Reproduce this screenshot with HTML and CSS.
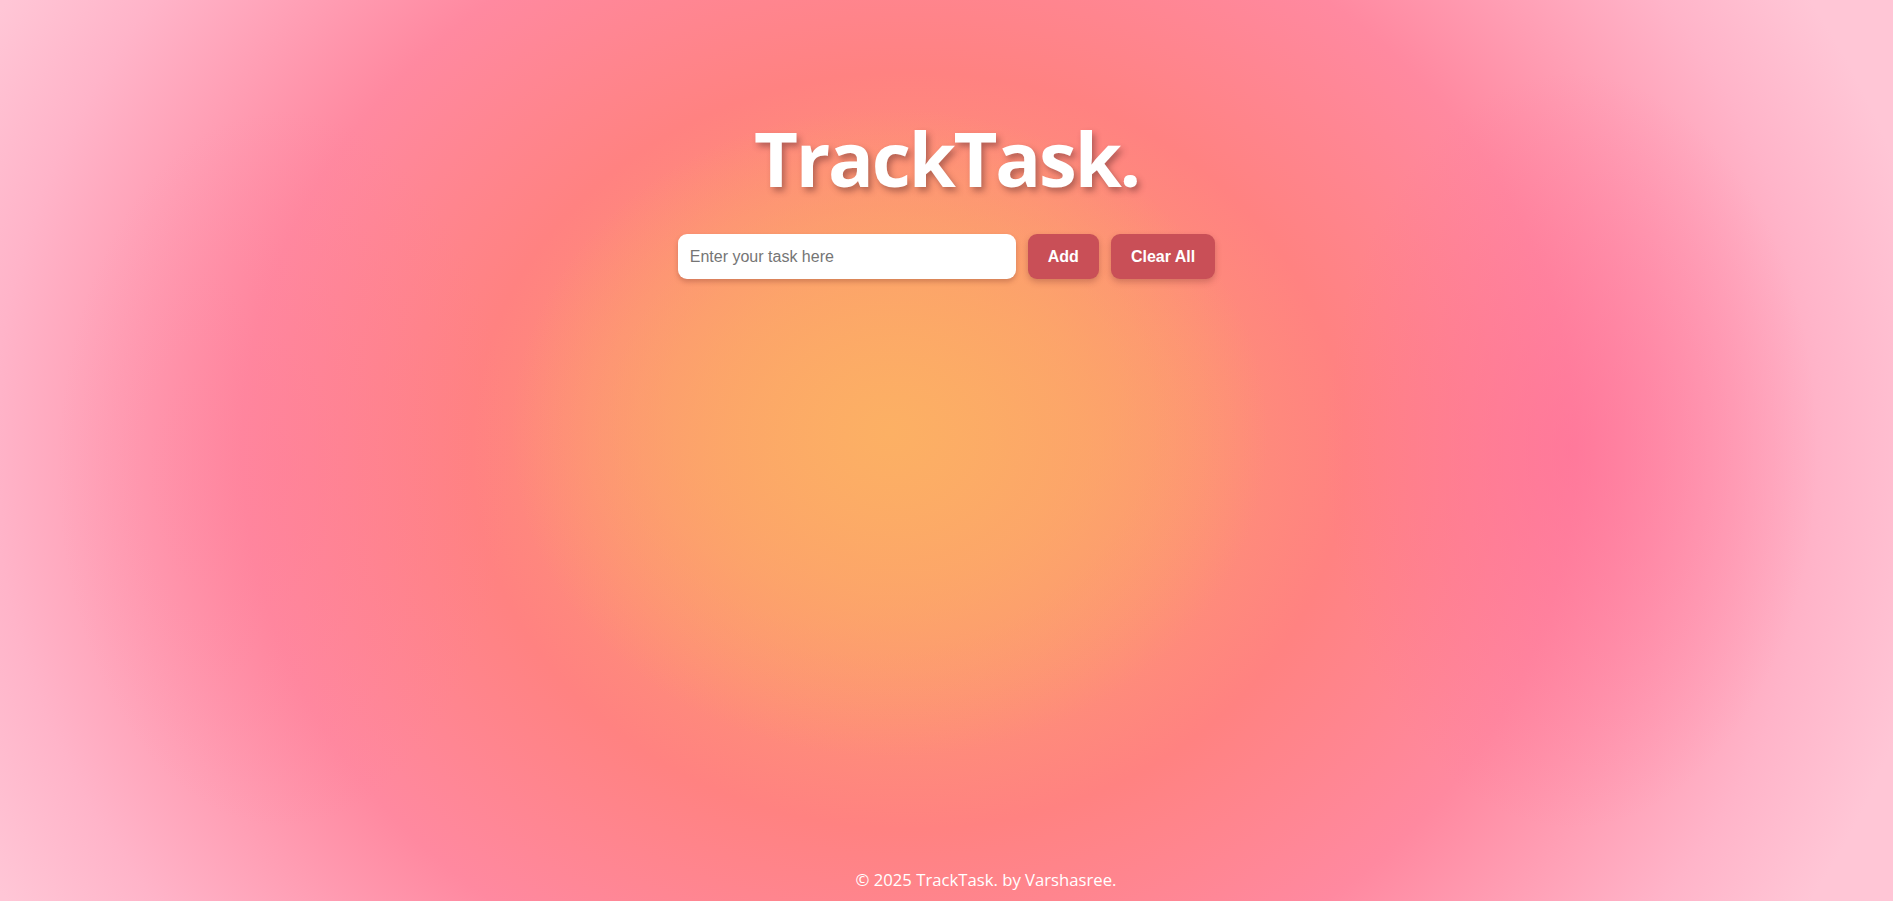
FILE: index.html
```html
<!DOCTYPE html>
<html lang="en">
<head>
<meta charset="UTF-8">
<title>TrackTask.</title>
<link rel="stylesheet" href="styles.css">
</head>
<body>
<main class="app">
  <h1 class="title">TrackTask.</h1>
  <div class="entry">
    <input class="task-input" type="text" placeholder="Enter your task here">
    <button class="btn">Add</button>
    <button class="btn">Clear All</button>
  </div>
  <ul class="task-list"></ul>
</main>
<footer class="footer">© 2025 TrackTask. by Varshasree.</footer>
</body>
</html>
```

FILE: styles.css
```css
html, body {
  margin: 0;
  padding: 0;
  height: 100%;
}

body {
  min-height: 100vh;
  display: flex;
  flex-direction: column;
  font-family: "Open Sans", "Liberation Sans", sans-serif;
  background-color: #ffc4d4;
  background-image:
    radial-gradient(ellipse 20% 36% at 47% 48%, rgba(252,176,100,1) 0%, rgba(252,170,102,0.8) 40%, rgba(252,160,110,0) 100%),
    radial-gradient(ellipse 13% 42% at 83% 50%, rgba(255,105,150,0.5) 0%, rgba(255,120,160,0) 100%),
    radial-gradient(ellipse 12% 40% at 15% 52%, rgba(255,120,150,0.3) 0%, rgba(255,130,160,0) 100%),
    radial-gradient(ellipse 55% 100% at 48% 50%, #fcab68 0%, #fd9872 20%, #ff8281 42%, #ff89a0 64%, #ffb4c9 88%, #ffc6d6 100%);
}

.app {
  flex: 1;
  display: flex;
  flex-direction: column;
  align-items: center;
}

.title {
  margin: 112px 0 0;
  font-family: "Open Sans", "Liberation Sans", sans-serif;
  font-weight: 700;
  font-size: 76px;
  line-height: 92px;
  letter-spacing: -2.2px;
  color: #ffffff;
  text-shadow: 3px 4px 6px rgba(90, 40, 40, 0.45);
}

.entry {
  margin-top: 30px;
  display: flex;
  gap: 12px;
}

.task-input {
  width: 338px;
  height: 45px;
  box-sizing: border-box;
  border: none;
  border-radius: 9px;
  padding: 0 12px;
  font-family: "Liberation Sans", Arial, sans-serif;
  font-size: 16px;
  color: #333;
  background: #ffffff;
  box-shadow: 0 3px 5px rgba(120, 50, 40, 0.3);
  outline: none;
}

.task-input::placeholder {
  color: #757575;
}

.btn {
  height: 45px;
  box-sizing: border-box;
  border: none;
  border-radius: 9px;
  padding: 0 20px;
  background: #c94f57;
  color: #ffffff;
  font-family: "Liberation Sans", Arial, sans-serif;
  font-weight: 700;
  font-size: 16px;
  box-shadow: 0 3px 6px rgba(110, 40, 40, 0.3);
  cursor: pointer;
}

.task-list {
  margin: 0;
  padding: 0;
  list-style: none;
}

.footer {
  padding: 0 0 10px 79px;
  text-align: center;
  color: #ffffff;
  font-family: "Open Sans", "Liberation Sans", sans-serif;
  font-size: 16.7px;
  line-height: 22px;
}
```
